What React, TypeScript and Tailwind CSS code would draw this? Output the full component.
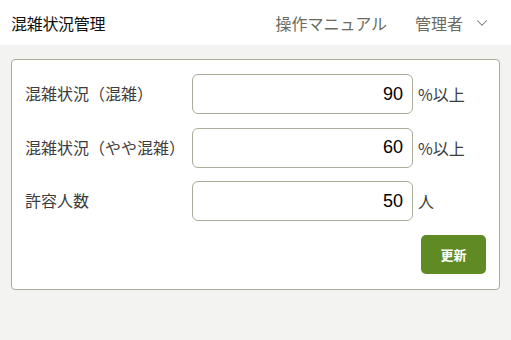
import { ChevronDown } from "lucide-react";

const rows = [
  { label: "混雑状況（混雑）", value: "90", unit: "%以上" },
  { label: "混雑状況（やや混雑）", value: "60", unit: "%以上" },
  { label: "許容人数", value: "50", unit: "人" },
];

const font = { fontFamily: '"Noto Sans CJK JP", "Liberation Sans", sans-serif' };

export default function App() {
  return (
    <div className="min-h-[340px] bg-[#f3f3f1]" style={font}>
      <header className="h-[45px] bg-white flex items-center px-[11px]">
        <h1 className="text-[16px] text-[#111] tracking-[-0.3px]">混雑状況管理</h1>
        <nav className="ml-auto flex items-center text-[16px] text-[#6b6b5e]">
          <span className="mr-[28px]">操作マニュアル</span>
          <span>管理者</span>
          <ChevronDown className="w-[18px] h-[18px] ml-[10px] mr-[9px] text-[#77776c]" strokeWidth={1.4} />
        </nav>
      </header>

      <div className="mx-[11px] mt-[14px] bg-white border border-[#a9ad9a] rounded-[4px] pt-[14px] pb-[15px] pl-[13px] pr-[13px]">
        <div className="flex flex-col gap-[13.5px]">
          {rows.map((r) => (
            <div key={r.label} className="flex items-center">
              <label className="w-[167px] text-[16px] text-[#3c3c3c] whitespace-nowrap -mt-[2px]">{r.label}</label>
              <div className="w-[221px] h-[40px] border border-[#a9ad9a] rounded-[6px] flex items-center justify-end pr-[9px]">
                <span className="text-[18px] text-black" style={{ fontFamily: '"Liberation Sans", Arial, sans-serif' }}>
                  {r.value}
                </span>
              </div>
              <span className="ml-[5px] text-[16px] text-[#3c3c3c]">{r.unit}</span>
            </div>
          ))}
        </div>
        <div className="flex justify-end mt-[14px]">
          <button className="w-[65px] h-[39px] rounded-[5px] bg-[#5f8a24] text-white text-[13px] font-bold">
            更新
          </button>
        </div>
      </div>
    </div>
  );
}
